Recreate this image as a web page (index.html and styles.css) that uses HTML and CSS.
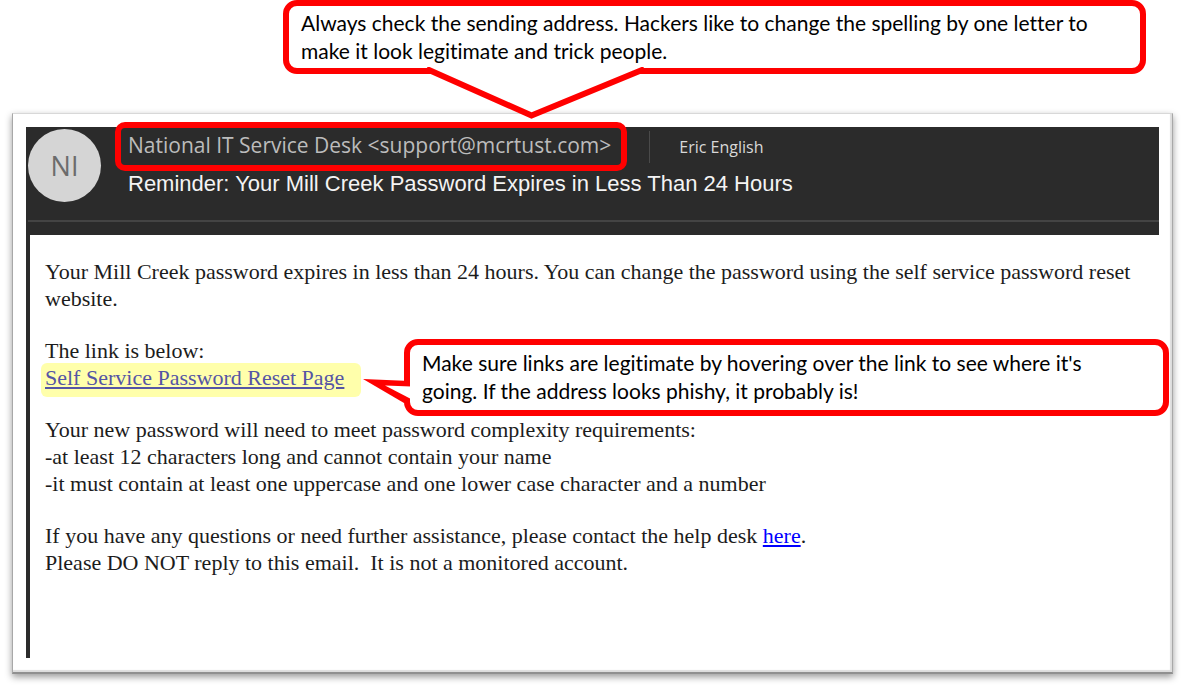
FILE: index.html
```html
<!DOCTYPE html>
<html lang="en">
<head>
<meta charset="utf-8">
<meta name="viewport" content="width=device-width, initial-scale=1">
<title>Spotting a phishing email</title>
<link rel="stylesheet" href="styles.css">
</head>
<body>
<main class="page">
  <aside class="callout callout-sender">
    <p class="callout-text">Always check the sending address. Hackers like to change the spelling by one letter to make it look legitimate and trick people.</p>
    <svg class="tail tail-down" width="220" height="54" viewBox="0 0 220 54" aria-hidden="true">
      <path d="M2 0 H215 V4 L104.500 48 L2 4 Z" fill="#fff"/>
      <path d="M2 3 L104.500 48.500 L215 3" fill="none" stroke="#f00" stroke-width="6" stroke-linecap="round"/>
    </svg>
  </aside>

  <article class="card">
    <div class="mail">
      <header class="mail-head">
        <div class="avatar">NI</div>
        <div class="head-text">
          <div class="from-row">
            <span class="sender">National IT Service Desk &lt;support@mcrtust.com&gt;</span>
            <span class="recipient">Eric English</span>
          </div>
          <h1 class="subject">Reminder: Your Mill Creek Password Expires in Less Than 24 Hours</h1>
        </div>
      </header>
      <div class="mail-body">
        <p>Your Mill Creek password expires in less than 24 hours. You can change the password using the self service password reset website.</p>
        <div class="link-block">
          <p>The link is below:<br><a class="reset-link" href="#reset">Self Service Password Reset Page</a></p>
          <aside class="callout callout-link">
            <p class="callout-text">Make sure links are legitimate by hovering over the link to see where it's going. If the address looks phishy, it probably is!</p>
            <svg class="tail tail-left" width="48" height="28" viewBox="0 0 48 28" aria-hidden="true">
              <path d="M0 2 L47 4 V22 L41 26 Z" fill="#f00"/>
              <path d="M22 8.500 L48 9.500 V22 Z" fill="#fff"/>
            </svg>
          </aside>
        </div>
        <p>Your new password will need to meet password complexity requirements:<br>-at least 12 characters long and cannot contain your name<br>-it must contain at least one uppercase and one lower case character and a number</p>
        <p>If you have any questions or need further assistance, please contact the help desk <a class="help-link" href="#help">here</a>.<br>Please DO NOT reply to this email.&nbsp; It is not a monitored account.</p>
      </div>
    </div>
  </article>
</main>
</body>
</html>
```
FILE: styles.css
```css
* {
  box-sizing: border-box;
}

body {
  margin: 0;
  background: #fff;
  color: #000;
}

p,
h1 {
  margin: 0;
}

.page {
  display: flex;
  flex-direction: column;
  gap: 39px;
  padding: 0 12px 16px;
}

.callout {
  position: relative;
  border: 6px solid #f00;
  border-radius: 14px;
  background: #fff;
}

.callout-text {
  font: 21px/28px Lato, Carlito, sans-serif;
  font-variant-ligatures: none;
}

.callout-sender {
  z-index: 1;
  margin: 0 27px 0 271px;
  padding: 3px 40px 3px 12px;
}

.tail {
  position: absolute;
  display: block;
}

.tail-down {
  top: 61px;
  left: 138px;
}

.card {
  padding: 13px 13px 14px 13px;
  border: 1px solid #a8a8a8;
  border-top-color: #d8d8d8;
  border-bottom: 2px solid #909090;
  background: #fff;
  box-shadow: 0 3px 7px rgba(0, 0, 0, 0.4), inset -2px -2px 1px #ddd;
}

.mail {
  border-left: 4px solid #2b2b2b;
}

.mail-head {
  display: flex;
  align-items: flex-start;
  gap: 14px;
  min-height: 108px;
  margin-left: -2px;
  padding-top: 2px;
  background: linear-gradient(#444, #444) 0 93px / 100% 2px no-repeat #2b2b2b;
}

.avatar {
  flex: none;
  width: 73px;
  height: 73px;
  border-radius: 50%;
  background: #d5d5d5;
  color: #6c6c6c;
  font: 27px/74px "Open Sans", sans-serif;
  text-align: center;
}

.from-row {
  display: flex;
  align-items: center;
  margin-top: -7px;
}

.sender {
  padding: 2px 10px 4px 7px;
  border: 6px solid #f00;
  border-radius: 10px;
  color: #bcbcbc;
  font: 21px/31px "Open Sans", sans-serif;
  white-space: nowrap;
}

.recipient {
  margin-left: 22px;
  padding-left: 29px;
  border-left: 1px solid #4a4a4a;
  color: #d8d8d8;
  font: 16px/32px "Open Sans", sans-serif;
}

.subject {
  padding-left: 13px;
  color: #f4f4f4;
  font: 22px/25px "Liberation Sans", Arial, sans-serif;
}

.mail-body {
  display: flex;
  flex-direction: column;
  gap: 25px;
  min-height: 423px;
  padding: 23px 10px 0 15px;
  color: #1c1c1c;
  font: 22px/27px "Liberation Serif", "Times New Roman", serif;
}

.link-block {
  position: relative;
}

.reset-link {
  margin-left: -4px;
  padding: 2px 17px 7px 4px;
  border-radius: 6px;
  background: #ffffab;
  color: #5555a5;
}

.help-link {
  color: #00f;
}

.callout-link {
  position: absolute;
  top: 2px;
  left: 359px;
  right: -20px;
  padding: 4px 40px 5px 12px;
  color: #000;
}

.tail-left {
  top: 32px;
  left: -47px;
}
```
